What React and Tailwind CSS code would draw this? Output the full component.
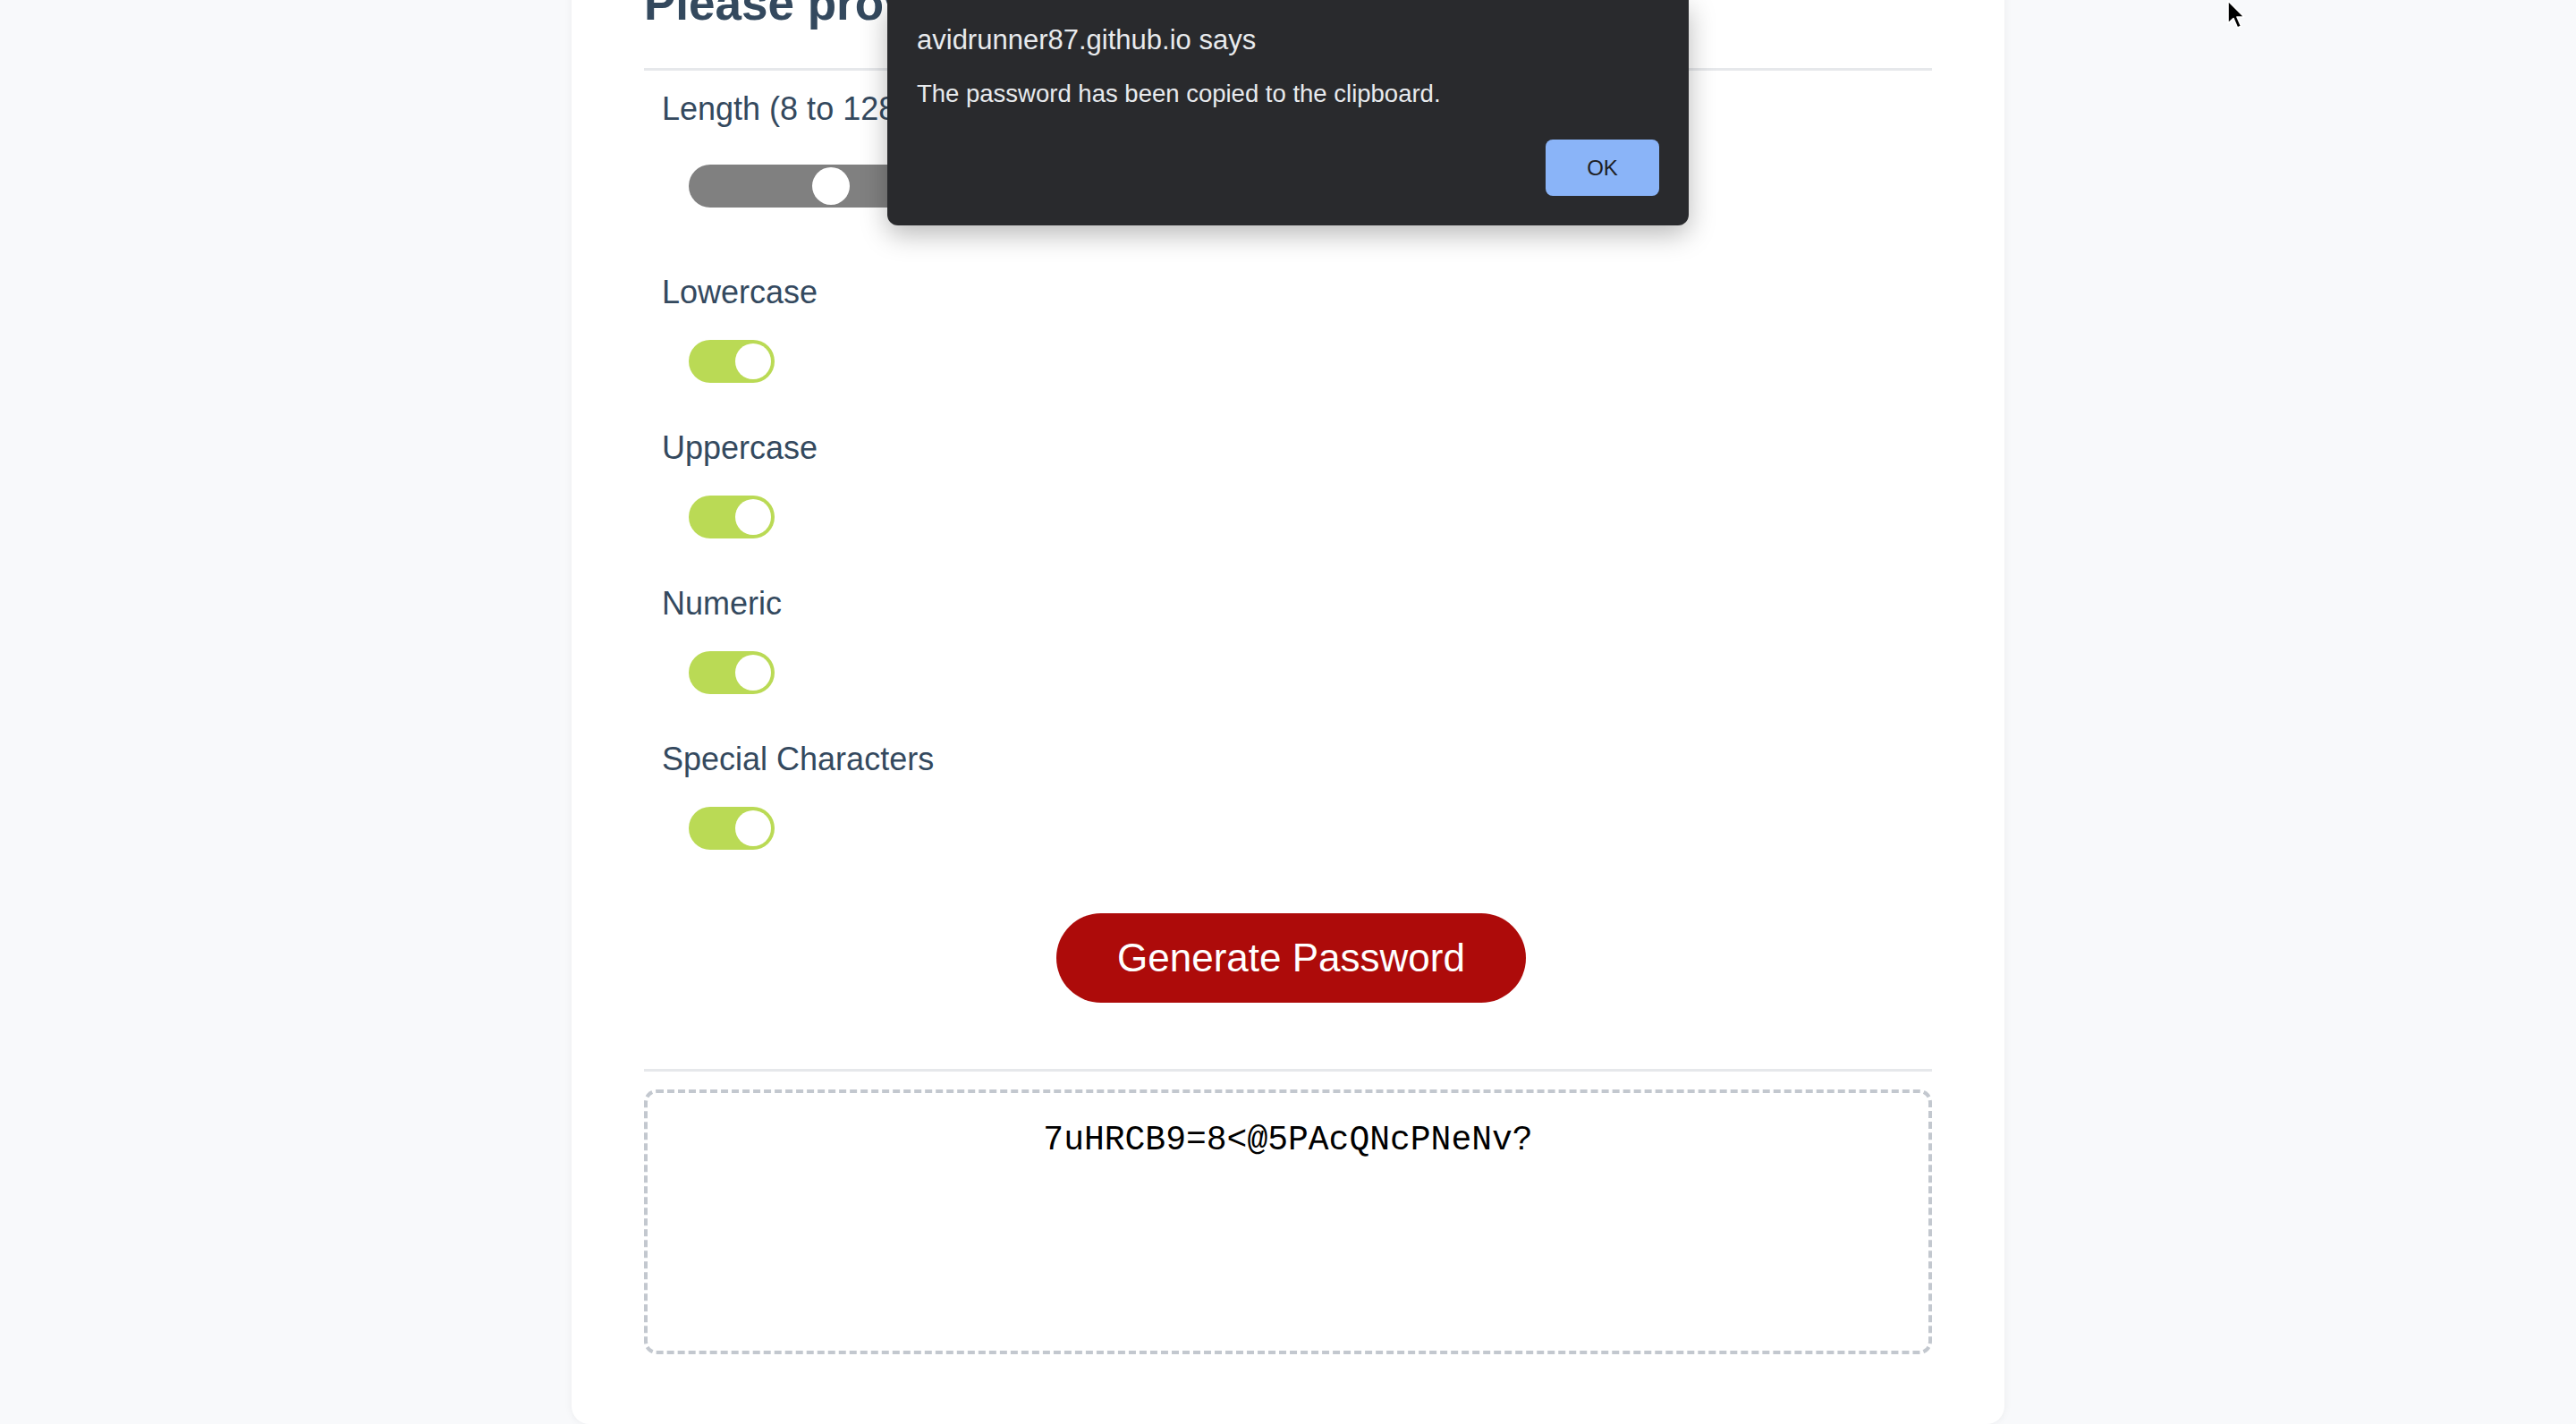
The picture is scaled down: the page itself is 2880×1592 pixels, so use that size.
import React from "react";

const Toggle = () => (
  <div className="ml-[50px] mt-[33px] w-[96px] h-[48px] rounded-full bg-[#bada55] flex items-center justify-end pr-[4px]">
    <div className="w-[40px] h-[40px] rounded-full bg-white" />
  </div>
);

const Criterion = ({ label }) => (
  <div className="mt-[53px] first:mt-[75px]">
    <div className="ml-[20px] h-[40px] text-[36px] leading-[40px] text-[#34495e]">{label}</div>
    <Toggle />
  </div>
);

const Cursor = () => (
  <svg className="absolute left-[2489px] top-[0px]" width="22" height="34" viewBox="0 0 22 34">
    <path
      d="M2 1 L2 26 L8 20.5 L12.5 31 L16.5 29.2 L12 19 L20 19 Z"
      fill="#000"
      stroke="#fff"
      strokeWidth="1.6"
      strokeLinejoin="round"
    />
  </svg>
);

const AlertDialog = () => (
  <div className="absolute left-[992px] top-0 w-[896px] rounded-b-[12px] bg-[#292a2d] px-[33px] pb-[33px] shadow-[0_10px_30px_rgba(0,0,0,0.28)] font-['Liberation_Sans',Arial,sans-serif]">
    <div className="pt-[25px] h-[65px] text-[31px] leading-[40px] text-[#e8eaed]">avidrunner87.github.io says</div>
    <div className="mt-[22px] text-[27.5px] leading-[36px] text-[#e8eaed]">The password has been copied to the clipboard.</div>
    <div className="mt-[33px] flex justify-end">
      <button className="w-[127px] h-[63px] rounded-[8px] bg-[#8ab4f8] text-[24px] font-medium text-[#202124]">OK</button>
    </div>
  </div>
);

export default function App() {
  const criteria = ["Lowercase", "Uppercase", "Numeric", "Special Characters"];
  return (
    <div className="relative min-h-screen overflow-hidden bg-[#f8f9fb] font-['Liberation_Sans',Arial,sans-serif]">
      <div className="mx-auto mt-[-27px] w-[1602px] rounded-b-[20px] bg-white px-[81px] pb-[78px] shadow-[0_0_10px_rgba(0,0,0,0.06)]">
        <h2 className="h-[62px] text-[53px] leading-[62px] font-bold text-[#34495e]">Please provide password criteria</h2>
        <div className="mt-[41px] h-[3px] bg-[#e6e8eb]" />

        <div className="mt-[23px] ml-[20px] h-[40px] text-[36px] leading-[40px] text-[#34495e]">Length (8 to 128 characters)</div>
        <div className="relative ml-[50px] mt-[42px] w-[1000px] h-[48px] rounded-full bg-[#808080]">
          <div className="absolute left-[138px] top-[3px] w-[42px] h-[42px] rounded-full bg-white" />
        </div>

        <div>
          {criteria.map((c) => (
            <Criterion key={c} label={c} />
          ))}
        </div>

        <div className="mt-[71px] flex justify-center pl-[7px]">
          <button className="w-[525px] h-[100px] rounded-full bg-[#ad0b0a] text-[44px] text-white">Generate Password</button>
        </div>

        <div className="mt-[74px] h-[3px] bg-[#e6e8eb]" />

        <div className="mt-[20px] h-[296px] rounded-[14px] border-[4px] border-dashed border-[#c3c8cf] pt-[31px] text-center">
          <div className="text-[38px] leading-[44px] text-black font-['Liberation_Mono','Courier_New',monospace]">7uHRCB9=8&lt;@5PAcQNcPNeNv?</div>
        </div>
      </div>

      <AlertDialog />
      <Cursor />
    </div>
  );
}
